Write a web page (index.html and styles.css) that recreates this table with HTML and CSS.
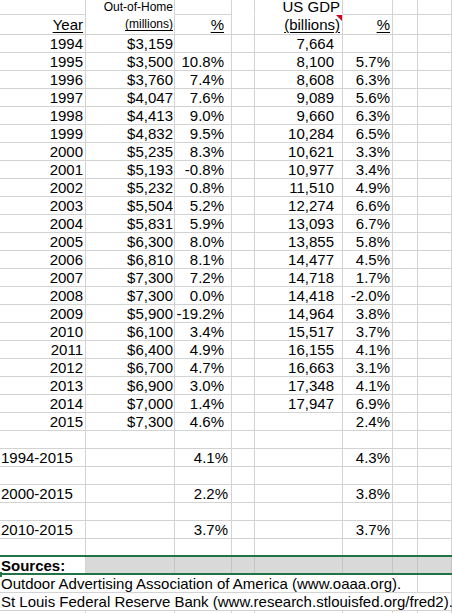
FILE: index.html
```html
<!DOCTYPE html>
<html>
<head>
<meta charset="utf-8">
<link rel="stylesheet" href="styles.css">
</head>
<body>
<div class="sheet">
  <div class="row r1">
    <div class="c a"></div>
    <div class="c b small nob">Out-of-Home</div>
    <div class="c c3"></div>
    <div class="c d nob"></div>
    <div class="c e hdr nob">US GDP</div>
    <div class="c f"></div>
    <div class="c g"></div>
    <div class="c h"></div>
  </div>
  <div class="row r2">
    <div class="c a"><u>Year</u></div>
    <div class="c b small"><u>(millions)</u></div>
    <div class="c c3"><u>%</u></div>
    <div class="c d"></div>
    <div class="c e hdr note"><u>(billions)</u><span class="tri"></span></div>
    <div class="c f"><u>%</u></div>
    <div class="c g"></div>
    <div class="c h"></div>
  </div>
  <div id="data"></div>
</div>
<script src="app.js"></script>
</body>
</html>
```

FILE: app.js
```js
const rows = [
  ["1994","$3,159","","7,664",""],
  ["1995","$3,500","10.8%","8,100","5.7%"],
  ["1996","$3,760","7.4%","8,608","6.3%"],
  ["1997","$4,047","7.6%","9,089","5.6%"],
  ["1998","$4,413","9.0%","9,660","6.3%"],
  ["1999","$4,832","9.5%","10,284","6.5%"],
  ["2000","$5,235","8.3%","10,621","3.3%"],
  ["2001","$5,193","-0.8%","10,977","3.4%"],
  ["2002","$5,232","0.8%","11,510","4.9%"],
  ["2003","$5,504","5.2%","12,274","6.6%"],
  ["2004","$5,831","5.9%","13,093","6.7%"],
  ["2005","$6,300","8.0%","13,855","5.8%"],
  ["2006","$6,810","8.1%","14,477","4.5%"],
  ["2007","$7,300","7.2%","14,718","1.7%"],
  ["2008","$7,300","0.0%","14,418","-2.0%"],
  ["2009","$5,900","-19.2%","14,964","3.8%"],
  ["2010","$6,100","3.4%","15,517","3.7%"],
  ["2011","$6,400","4.9%","16,155","4.1%"],
  ["2012","$6,700","4.7%","16,663","3.1%"],
  ["2013","$6,900","3.0%","17,348","4.1%"],
  ["2014","$7,000","1.4%","17,947","6.9%"],
  ["2015","$7,300","4.6%","","2.4%"]
];
const summary = [
  ["1994-2015","4.1%","4.3%"],
  ["2000-2015","2.2%","3.8%"],
  ["2010-2015","3.7%","3.7%"]
];
const host = document.getElementById("data");
function cell(cls, text) {
  const d = document.createElement("div");
  d.className = "c " + cls;
  d.textContent = text || "";
  return d;
}
function row(extra) {
  const r = document.createElement("div");
  r.className = "row" + (extra ? " " + extra : "");
  host.appendChild(r);
  return r;
}
function blank() {
  const r = row();
  ["a","b","c3","d","e","f","g","h"].forEach(k => r.appendChild(cell(k)));
}
rows.forEach(v => {
  const r = row();
  r.appendChild(cell("a", v[0]));
  r.appendChild(cell("b", v[1]));
  r.appendChild(cell("c3", v[2]));
  r.appendChild(cell("d"));
  r.appendChild(cell("e", v[3]));
  r.appendChild(cell("f", v[4]));
  r.appendChild(cell("g"));
  r.appendChild(cell("h"));
});
summary.forEach(v => {
  blank();
  const r = row();
  r.appendChild(cell("a left", v[0]));
  r.appendChild(cell("b"));
  r.appendChild(cell("c3 sum", v[1]));
  r.appendChild(cell("d"));
  r.appendChild(cell("e"));
  r.appendChild(cell("f", v[2]));
  r.appendChild(cell("g"));
  r.appendChild(cell("h"));
});
blank();
{
  const r = row("sel");
  r.appendChild(cell("a left bold", "Sources:"));
  ["b","c3","d","e","f","g","h"].forEach(k => r.appendChild(cell(k + " grey")));
}
{
  const r = row();
  r.appendChild(cell("span7 left", "Outdoor Advertising Association of America (www.oaaa.org)."));
  r.appendChild(cell("h"));
}
{
  const r = row();
  r.appendChild(cell("span8 left", "St Louis Federal Reserve Bank (www.research.stlouisfed.org/fred2)."));
}
blank();
```

FILE: styles.css
```css
html, body {
  margin: 0;
  padding: 0;
  background: #ffffff;
}
body {
  font-family: "Liberation Sans", Arial, sans-serif;
  font-size: 15px;
  color: #000;
  overflow: hidden;
}
.sheet {
  width: 452px;
}
.row {
  display: grid;
  grid-template-columns: 86px 89px 57px 23px 88px 50px 25px 1fr;
  height: 18px;
}
.row.r1 { height: 15px; }
.row.r2 { height: 20px; }
.c {
  box-sizing: border-box;
  border-right: 1px solid #d3d3d3;
  border-bottom: 1px solid #d3d3d3;
  line-height: 17px;
  text-align: right;
  white-space: nowrap;
  position: relative;
}
.r1 .c { line-height: 14px; }
.r1 .c.nob { border-bottom-color: transparent; }
.r2 .c { padding-top: 1px; }
.a { padding-right: 2px; }
.b { padding-right: 1px; }
.c3 { padding-right: 7px; }
.c3.sum { padding-right: 3px; }
.e { padding-right: 8px; }
.e.hdr { padding-right: 2px; }
.f { padding-right: 2px; }
.small { font-size: 12px; }
.left { text-align: left; padding-left: 1px; padding-right: 0; }
.bold { font-weight: bold; }
.span7 { grid-column: 1 / span 7; }
.span8 { grid-column: 1 / span 8; }
u { text-decoration: underline; text-underline-offset: 2px; }
.tri {
  position: absolute;
  right: 0;
  top: 0;
  width: 0;
  height: 0;
  border-top: 6px solid #d0021b;
  border-left: 6px solid transparent;
}
.grey {
  background: #d9d9d9;
  border-right-color: #c4c4c4;
}
.sel { position: relative; }
.sel::after {
  content: "";
  position: absolute;
  left: 0;
  right: 0;
  top: -2px;
  bottom: 0;
  border-top: 2px solid #217346;
  border-bottom: 2px solid #217346;
  pointer-events: none;
}
.sel::before {
  content: "";
  position: absolute;
  left: 0;
  bottom: -2px;
  width: 2px;
  height: 5px;
  background: #217346;
  z-index: 1;
}
```
